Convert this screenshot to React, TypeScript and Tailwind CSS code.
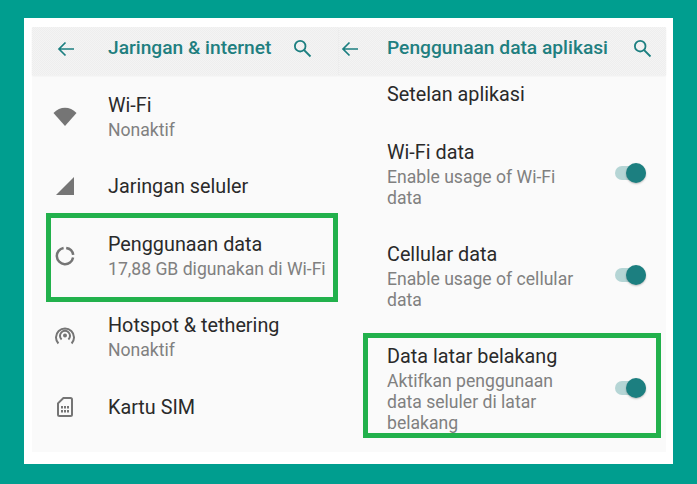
const font = "font-['Roboto',sans-serif]";

function BackArrow() {
  return (
    <svg width="18" height="16" viewBox="0 0 18 16" fill="none" stroke="#1c7f80" strokeWidth="1.7">
      <path d="M17 8H2M8.5 1.5L2 8l6.5 6.5" />
    </svg>
  );
}

function SearchIcon() {
  return (
    <svg width="19" height="19" viewBox="0 0 19 19" fill="none" stroke="#1c7f80" strokeWidth="1.8">
      <circle cx="7.2" cy="7.2" r="5.3" />
      <path d="M11 11l6.5 6.5" />
    </svg>
  );
}

function Header({ title, arrowGap, searchClass }: { title: string; arrowGap: string; searchClass: string }) {
  return (
    <div className="flex h-[48px] items-center bg-[repeating-conic-gradient(#eeeeee_0_25%,#f4f4f4_0_50%)] bg-[length:2px_2px] pb-[5px] shadow-[0_1px_2px_rgba(0,0,0,0.05)]">
      <div className={arrowGap}>
        <BackArrow />
      </div>
      <span className="text-[19.2px] font-medium text-[#1f7f80] whitespace-nowrap">{title}</span>
      <div className={searchClass}>
        <SearchIcon />
      </div>
    </div>
  );
}

function WifiIcon() {
  return (
    <svg width="24" height="20" viewBox="0 0 24 20">
      <path d="M12 19L.5 6C7-1 17-1 23.5 6z" fill="#757575" />
    </svg>
  );
}

function SignalIcon() {
  return (
    <svg width="20" height="20" viewBox="0 0 20 20">
      <path d="M19 1v18H1z" fill="#757575" />
    </svg>
  );
}

function UsageIcon() {
  return (
    <svg width="20" height="20" viewBox="0 0 20 20" fill="none" stroke="#757575" strokeWidth="2.5">
      <path d="M11.2 1.900a8.200 8.200 0 0 1 7 7M18.100 11.500A8.200 8.200 0 1 1 8.600 1.900" />
    </svg>
  );
}

function HotspotIcon() {
  return (
    <svg className="-mt-[3px]" width="20" height="19" viewBox="0 0 20 19" fill="none" stroke="#757575" strokeWidth="2">
      <circle cx="10" cy="9.500" r="2" fill="#757575" stroke="none" />
      <path d="M6.600 13.500a5 5 0 1 1 6.800 0M3.400 17.500a9 9 0 1 1 13.200 0" />
    </svg>
  );
}

function SimIcon() {
  return (
    <svg width="16" height="20" viewBox="0 0 16 20">
      <path d="M6.400 1H13.500A1.500 1.500 0 0 1 15 2.500V17.500A1.500 1.500 0 0 1 13.500 19H2.500A1.500 1.500 0 0 1 1 17.500V6.400z" fill="none" stroke="#757575" strokeWidth="2" />
      <path
        d="M4 9h2v2.500H4zM7 9h2v2.500H7zM10 9h2v2.500h-2zM4 13h2v2.500H4zM7 13h2v2.500H7zM10 13h2v2.500h-2z"
        fill="#757575"
      />
    </svg>
  );
}

function Toggle() {
  return (
    <div className="relative h-[14px] w-[31px] rounded-full bg-[#b5d5d5]">
      <div className="absolute right-0 top-[-3px] size-[20px] rounded-full bg-[#1c7f80] shadow-[0_1px_2px_rgba(0,0,0,0.25)]" />
    </div>
  );
}

function NetRow({ icon, title, sub, height }: { icon: React.ReactNode; title: string; sub?: string; height: string }) {
  return (
    <div className={`flex items-center ${height}`}>
      <div className="flex w-[76px] shrink-0 justify-center pr-[10px]">{icon}</div>
      <div className="pt-[2px]">
        <div className="text-[19.8px] leading-[24px] text-[#2a2a2a]">{title}</div>
        {sub && <div className="text-[17.6px] leading-[25px] text-[#808080] whitespace-nowrap">{sub}</div>}
      </div>
    </div>
  );
}

function AppRow({ title, lines, height }: { title: string; lines: string[]; height: string }) {
  return (
    <div className={`flex items-center pr-[20px] ${height}`}>
      <div className="w-[228px] pt-[3px]">
        <div className="mb-[1px] text-[19.8px] leading-[26px] text-[#2a2a2a]">{title}</div>
        {lines.map((l) => (
          <div key={l} className="text-[17.6px] leading-[21px] text-[#808080] whitespace-nowrap">
            {l}
          </div>
        ))}
      </div>
      <div className="ml-auto">
        <Toggle />
      </div>
    </div>
  );
}

export default function App() {
  return (
    <div className={`h-[484px] w-[697px] bg-[#009e8f] pl-[24px] pr-[24px] pt-[18px] ${font}`}>
      <div className="h-[446px] bg-white pb-[12px] pl-[8px] pr-[7px] pt-[9px]">
        <div className="relative flex h-[425px] bg-[#fafafa]">
          <div className="w-[307px] shrink-0">
            <Header title="Jaringan & internet" arrowGap="w-[76px] pl-[25px]" searchClass="ml-[22px]" />
            <div>
              <NetRow icon={<WifiIcon />} title="Wi-Fi" sub="Nonaktif" height="h-[84px]" />
              <NetRow icon={<SignalIcon />} title="Jaringan seluler" height="h-[54px]" />
              <NetRow icon={<UsageIcon />} title="Penggunaan data" sub="17,88 GB digunakan di Wi-Fi" height="h-[86px]" />
              <NetRow icon={<HotspotIcon />} title="Hotspot & tethering" sub="Nonaktif" height="h-[76px]" />
              <NetRow icon={<SimIcon />} title="Kartu SIM" height="h-[64px]" />
            </div>
          </div>
          <div className="min-w-0 flex-1">
            <Header title="Penggunaan data aplikasi" arrowGap="w-[48px] pl-[2px]" searchClass="ml-[25px]" />
            <div className="pl-[48px]">
              <div className="h-[47px] text-[19.8px] leading-[40px] text-[#2a2a2a]">Setelan aplikasi</div>
              <AppRow title="Wi-Fi data" lines={["Enable usage of Wi-Fi", "data"]} height="h-[102px]" />
              <AppRow title="Cellular data" lines={["Enable usage of cellular", "data"]} height="h-[102px]" />
              <AppRow
                title="Data latar belakang"
                lines={["Aktifkan penggunaan", "data seluler di latar", "belakang"]}
                height="h-[123px]"
              />
            </div>
          </div>
          <div className="absolute left-[14px] top-[186px] h-[89px] w-[292px] border-[5px] border-[#22b14c]" />
          <div className="absolute left-[331px] top-[306px] h-[105px] w-[298px] border-[5px] border-[#22b14c]" />
        </div>
      </div>
    </div>
  );
}
